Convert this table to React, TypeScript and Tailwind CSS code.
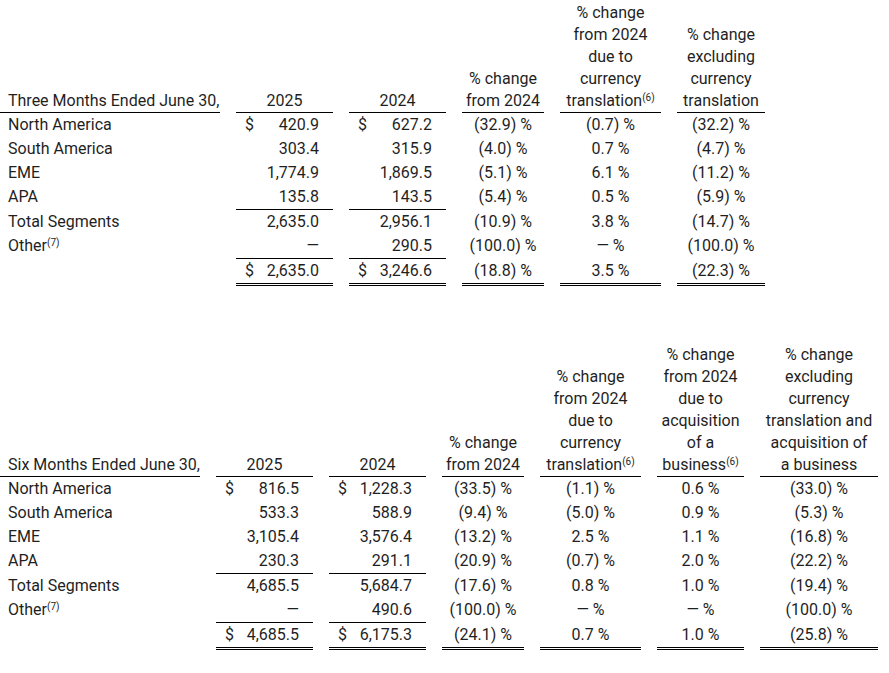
import React from "react";

// Segment net sales tables: three months and six months ended June 30.

type Row = {
  label: React.ReactNode;
  amounts: { dollar?: boolean; value: string }[];
  pcts: string[];
  rule?: "single" | "double";
};

type TableSpec = {
  title: string;
  widths: string[];
  pctHeaders: React.ReactNode[];
  rows: Row[];
};

const Sup = ({ n }: { n: number }) => (
  <sup className="text-[10px]">({n})</sup>
);

const other = (
  <>
    Other
    <Sup n={7} />
  </>
);

const threeMonths: TableSpec = {
  title: "Three Months Ended June 30,",
  widths: ["w-[220px]", "w-[97px]", "w-[97px]", "w-[82px]", "w-[101px]", "w-[88px]"],
  pctHeaders: [
    <>
      % change
      <br />
      from 2024
    </>,
    <>
      % change
      <br />
      from 2024
      <br />
      due to
      <br />
      currency
      <br />
      translation
      <Sup n={6} />
    </>,
    <>
      % change
      <br />
      excluding
      <br />
      currency
      <br />
      translation
    </>,
  ],
  rows: [
    { label: "North America", amounts: [{ dollar: true, value: "420.9" }, { dollar: true, value: "627.2" }], pcts: ["(32.9) %", "(0.7) %", "(32.2) %"] },
    { label: "South America", amounts: [{ value: "303.4" }, { value: "315.9" }], pcts: ["(4.0) %", "0.7 %", "(4.7) %"] },
    { label: "EME", amounts: [{ value: "1,774.9" }, { value: "1,869.5" }], pcts: ["(5.1) %", "6.1 %", "(11.2) %"] },
    { label: "APA", amounts: [{ value: "135.8" }, { value: "143.5" }], pcts: ["(5.4) %", "0.5 %", "(5.9) %"], rule: "single" },
    { label: "Total Segments", amounts: [{ value: "2,635.0" }, { value: "2,956.1" }], pcts: ["(10.9) %", "3.8 %", "(14.7) %"] },
    { label: other, amounts: [{ value: "—" }, { value: "290.5" }], pcts: ["(100.0) %", "— %", "(100.0) %"], rule: "single" },
    { label: "", amounts: [{ dollar: true, value: "2,635.0" }, { dollar: true, value: "3,246.6" }], pcts: ["(18.8) %", "3.5 %", "(22.3) %"], rule: "double" },
  ],
};

const sixMonths: TableSpec = {
  title: "Six Months Ended June 30,",
  widths: ["w-[200px]", "w-[97px]", "w-[97px]", "w-[82px]", "w-[101px]", "w-[87px]", "w-[118px]"],
  pctHeaders: [
    <>
      % change
      <br />
      from 2024
    </>,
    <>
      % change
      <br />
      from 2024
      <br />
      due to
      <br />
      currency
      <br />
      translation
      <Sup n={6} />
    </>,
    <>
      % change
      <br />
      from 2024
      <br />
      due to
      <br />
      acquisition
      <br />
      of a
      <br />
      business
      <Sup n={6} />
    </>,
    <>
      % change
      <br />
      excluding
      <br />
      currency
      <br />
      translation and
      <br />
      acquisition of
      <br />a business
    </>,
  ],
  rows: [
    { label: "North America", amounts: [{ dollar: true, value: "816.5" }, { dollar: true, value: "1,228.3" }], pcts: ["(33.5) %", "(1.1) %", "0.6 %", "(33.0) %"] },
    { label: "South America", amounts: [{ value: "533.3" }, { value: "588.9" }], pcts: ["(9.4) %", "(5.0) %", "0.9 %", "(5.3) %"] },
    { label: "EME", amounts: [{ value: "3,105.4" }, { value: "3,576.4" }], pcts: ["(13.2) %", "2.5 %", "1.1 %", "(16.8) %"] },
    { label: "APA", amounts: [{ value: "230.3" }, { value: "291.1" }], pcts: ["(20.9) %", "(0.7) %", "2.0 %", "(22.2) %"], rule: "single" },
    { label: "Total Segments", amounts: [{ value: "4,685.5" }, { value: "5,684.7" }], pcts: ["(17.6) %", "0.8 %", "1.0 %", "(19.4) %"] },
    { label: other, amounts: [{ value: "—" }, { value: "490.6" }], pcts: ["(100.0) %", "— %", "— %", "(100.0) %"], rule: "single" },
    { label: "", amounts: [{ dollar: true, value: "4,685.5" }, { dollar: true, value: "6,175.3" }], pcts: ["(24.1) %", "0.7 %", "1.0 %", "(25.8) %"], rule: "double" },
  ],
};

function ruleClass(rule?: "single" | "double") {
  if (rule === "single") return "border-b border-black";
  if (rule === "double") return "border-b-[3px] border-double border-black";
  return "";
}

function SegmentTable({ spec }: { spec: TableSpec }) {
  const [labelW, ...dataW] = spec.widths;
  return (
    <div className="flex flex-col">
      {/* Header */}
      <div className="flex items-end gap-4 leading-[22px]">
        <div className={`${labelW} border-b border-black pl-2`}>{spec.title}</div>
        {["2025", "2024"].map((y, i) => (
          <div key={y} className={`${dataW[i]} border-b border-black text-center`}>
            {y}
          </div>
        ))}
        {spec.pctHeaders.map((h, i) => (
          <div key={i} className={`${dataW[i + 2]} border-b border-black text-center`}>
            {h}
          </div>
        ))}
      </div>

      {/* Body */}
      {spec.rows.map((row, r) => (
        <div key={r} className="flex gap-4 leading-6">
          <div className={`${labelW} pl-2 whitespace-nowrap`}>{row.label}</div>
          {row.amounts.map((a, i) => (
            <div
              key={i}
              className={`${dataW[i]} flex justify-between pl-[9px] pr-[14px] ${ruleClass(row.rule)}`}
            >
              <span>{a.dollar ? "$" : ""}</span>
              <span>{a.value}</span>
            </div>
          ))}
          {row.pcts.map((p, i) => (
            <div
              key={i}
              className={`${dataW[i + 2]} text-center ${row.rule === "double" ? ruleClass("double") : ""}`}
            >
              {p}
            </div>
          ))}
        </div>
      ))}
    </div>
  );
}

export default function App() {
  return (
    <div className="min-h-[673px] w-[889px] bg-white pt-[2px] font-['Roboto',sans-serif] text-[16px] text-[#1f1f1f]">
      <SegmentTable spec={threeMonths} />
      <div className="h-[58px]" />
      <SegmentTable spec={sixMonths} />
    </div>
  );
}
